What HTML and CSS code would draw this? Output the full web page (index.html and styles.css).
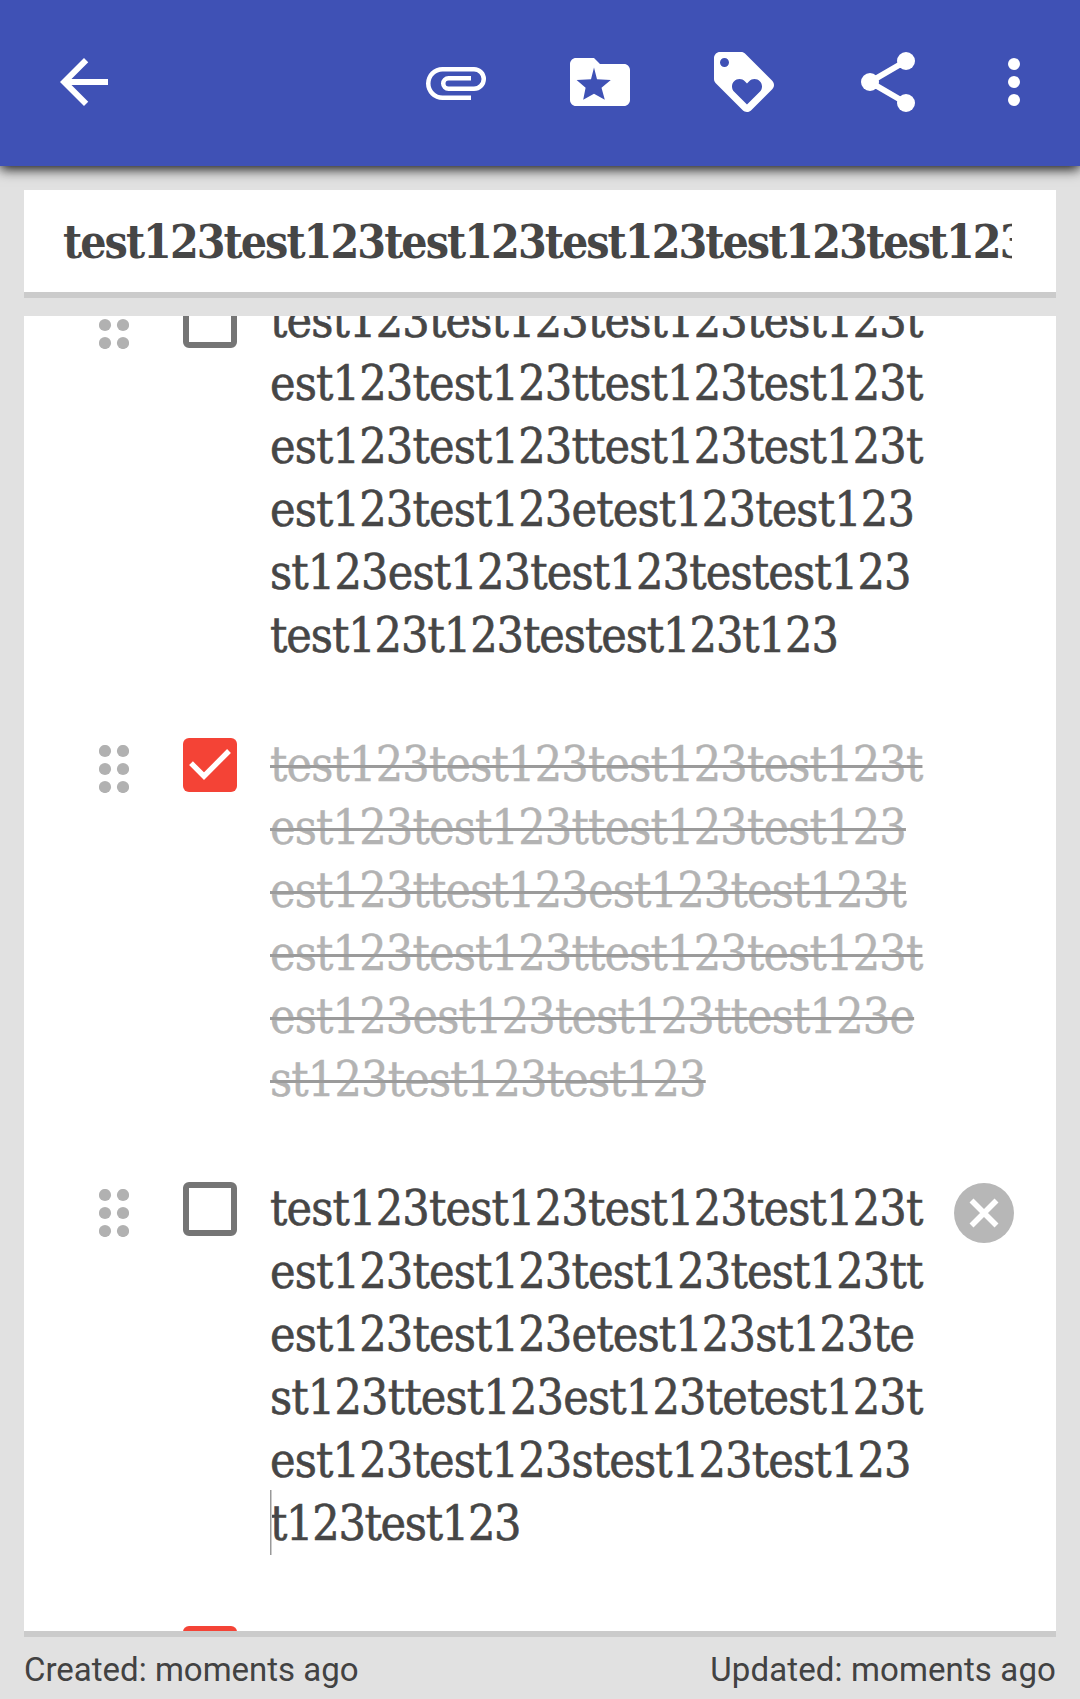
FILE: index.html
```html
<!DOCTYPE html>
<html lang="en">
<head>
<meta charset="utf-8">
<meta name="viewport" content="width=device-width">
<title>Checklist note</title>
<link rel="stylesheet" href="styles.css">
</head>
<body>
<svg class="defs" aria-hidden="true">
  <symbol id="drag" viewBox="0 0 30 48"><circle cx="6" cy="6" r="6.1"/><circle cx="24" cy="6" r="6.1"/><circle cx="6" cy="24" r="6.1"/><circle cx="24" cy="24" r="6.1"/><circle cx="6" cy="42" r="6.1"/><circle cx="24" cy="42" r="6.1"/></symbol>
  <symbol id="tick" viewBox="0 0 54 54"><path d="M8 25.200 21 38.200 46 13" fill="none" stroke="#fff" stroke-width="5.400"/></symbol>
</svg>
<header class="toolbar">
  <svg class="icon" viewBox="0 0 24 24"><path d="M20 11H7.830l5.590-5.590L12 4l-8 8 8 8 1.410-1.410L7.830 13H20v-2z"/></svg>
  <nav class="actions">
    <svg class="icon" viewBox="0 0 24 24"><path d="M7.500 18A5.500 5.500 0 0 1 2 12.500 5.500 5.500 0 0 1 7.500 7H18a4 4 0 0 1 0 8H9.500a2.500 2.500 0 0 1 0-5H17v1.500H9.500a1 1 0 0 0 0 2H18a2.500 2.500 0 0 0 0-5H7.500a4 4 0 0 0 0 8H17V18H7.500z"/></svg>
    <svg class="icon" viewBox="0 0 24 24"><path fill-rule="evenodd" d="M20 6h-8l-2-2H4c-1.100 0-2 .9-2 2v12c0 1.100.9 2 2 2h16c1.100 0 2-.9 2-2V8c0-1.100-.9-2-2-2zM10 7.200l1 3.900 4.600.2-3.100 2.600 1.100 4L10 15.900l-3.600 2 .8-4-3-2.600 4.800-.2z"/></svg>
    <svg class="icon" viewBox="0 0 24 24"><path d="M21.410 11.580l-9-9C12.050 2.220 11.550 2 11 2H4c-1.100 0-2 .9-2 2v7c0 .55.22 1.050.59 1.420l9 9c.36.36.86.58 1.410.58.55 0 1.050-.22 1.410-.59l7-7c.37-.36.59-.86.59-1.410 0-.55-.23-1.060-.59-1.420zM5.500 7C4.670 7 4 6.330 4 5.500S4.670 4 5.500 4 7 4.670 7 5.500 6.330 7 5.500 7zm11.770 8.270L13 19.540l-4.270-4.270C8.280 14.810 8 14.190 8 13.500c0-1.380 1.120-2.500 2.500-2.500.69 0 1.320.28 1.770.74l.73.72.73-.73c.45-.45 1.080-.73 1.770-.73 1.380 0 2.500 1.120 2.500 2.500 0 .69-.28 1.320-.73 1.770z"/></svg>
    <svg class="icon" viewBox="0 0 24 24"><path d="M18 5 6 12l12 7" fill="none" stroke="#fff" stroke-width="2"/><circle cx="18" cy="5" r="3"/><circle cx="6" cy="12" r="3"/><circle cx="18" cy="19" r="3"/></svg>
    <svg class="icon overflow" viewBox="0 0 24 24"><circle cx="12" cy="6" r="2"/><circle cx="12" cy="12" r="2"/><circle cx="12" cy="18" r="2"/></svg>
  </nav>
</header>
<main class="note">
  <div class="card title"><h1>test123test123test123test123test123test123</h1></div>
  <ul class="card list">
    <li class="item">
      <svg class="handle"><use href="#drag"/></svg>
      <span class="box"></span>
      <p class="text"><span>test123test123test123test123t</span><span>est123test123ttest123test123t</span><span>est123test123ttest123test123t</span><span>est123test123etest123test123</span><span>st123est123test123testest123</span><span class="tight">test123t123testest123t123</span></p>
    </li>
    <li class="item done">
      <svg class="handle"><use href="#drag"/></svg>
      <span class="box"><svg class="check"><use href="#tick"/></svg></span>
      <p class="text"><span>test123test123test123test123t</span><span>est123test123ttest123test123</span><span>est123ttest123est123test123t</span><span>est123test123ttest123test123t</span><span>est123est123test123ttest123e</span><span>st123test123test123</span></p>
    </li>
    <li class="item">
      <svg class="handle"><use href="#drag"/></svg>
      <span class="box"></span>
      <p class="text"><span>test123test123test123test123t</span><span>est123test123test123test123tt</span><span>est123test123etest123st123te</span><span>st123ttest123est123tetest123t</span><span>est123test123stest123test123</span><span class="caret">t123test123</span></p>
      <svg class="remove" viewBox="0 0 60 60"><circle cx="30" cy="30" r="30" fill="#b7b7b7"/><path d="M17.500 17.500l25 25m0-25-25 25" stroke="#fff" stroke-width="5.600"/></svg>
    </li>
    <li class="item done">
      <svg class="handle"><use href="#drag"/></svg>
      <span class="box"></span>
    </li>
  </ul>
</main>
<footer class="meta"><span>Created: moments ago</span><span class="updated">Updated: moments ago</span></footer>
</body>
</html>
```
FILE: styles.css
```css
* { box-sizing: border-box; margin: 0; padding: 0; }

body {
  height: 1699px;
  overflow: hidden;
  display: flex;
  flex-direction: column;
  background: #e1e1e1;
  color: #464646;
  font-family: "Roboto Slab", "DejaVu Serif Condensed", "DejaVu Serif", serif;
}

.defs { display: none; }

.toolbar {
  flex: none;
  height: 166px;
  padding: 0 30px 2px 48px;
  display: flex;
  align-items: center;
  justify-content: space-between;
  background: #3f51b5;
  box-shadow: 0 3px 12px rgba(0, 0, 0, 0.95);
}

.actions { display: flex; gap: 72px; }
.icon { display: block; width: 72px; height: 72px; fill: #fff; }
.overflow { margin-left: -18px; }

.note {
  flex: none;
  display: flex;
  flex-direction: column;
  gap: 18px;
  padding: 24px 24px 0;
}

.card { background: #fff; border-bottom: 6px solid #cbcbcb; }

.title { height: 108px; padding: 0 44px 0 39px; }

h1 {
  overflow: hidden;
  white-space: nowrap;
  font-size: 46px;
  font-weight: 700;
  font-stretch: condensed;
  letter-spacing: -1.95px;
  line-height: 104px;
}

.list { height: 1321px; overflow: hidden; list-style: none; }

.item {
  display: flex;
  align-items: flex-start;
  height: 444px;
  padding-left: 75px;
}
.item:first-child { margin-top: -29px; }

.handle { width: 30px; height: 48px; margin-top: 14px; fill: #b1b1b1; }

.box {
  width: 54px;
  height: 54px;
  margin: 7px 33px 0 54px;
  border: 6px solid #757575;
  border-radius: 6px;
}
.done .box { border: 0; background: #f44336; }
.check { display: block; width: 54px; height: 54px; }

.text {
  width: 684px;
  padding-top: 2px;
  font-size: 48px;
  font-stretch: condensed;
  letter-spacing: -0.83px;
  line-height: 63px;
  -webkit-text-stroke: 0.6px;
}
.text span { display: block; white-space: nowrap; }
.text .tight { letter-spacing: -1.05px; }
.done .text {
  color: #b3b3b3;
  text-decoration: line-through 3px #9b9b9b;
  -webkit-text-stroke: 0.4px #b3b3b3;
}

.text .caret { position: relative; letter-spacing: -1.3px; }
.caret::before {
  content: "";
  position: absolute;
  left: 0;
  top: -2px;
  width: 2px;
  height: 65px;
  background: linear-gradient(90deg, #999 50%, #ccc 50%);
}

.remove { width: 60px; height: 60px; margin-top: 8px; }

.meta {
  display: flex;
  justify-content: space-between;
  padding: 2px 24px 0;
  color: #424242;
  font: 33px/62px Roboto, sans-serif;
}
.updated { letter-spacing: 0.12px; }
```
